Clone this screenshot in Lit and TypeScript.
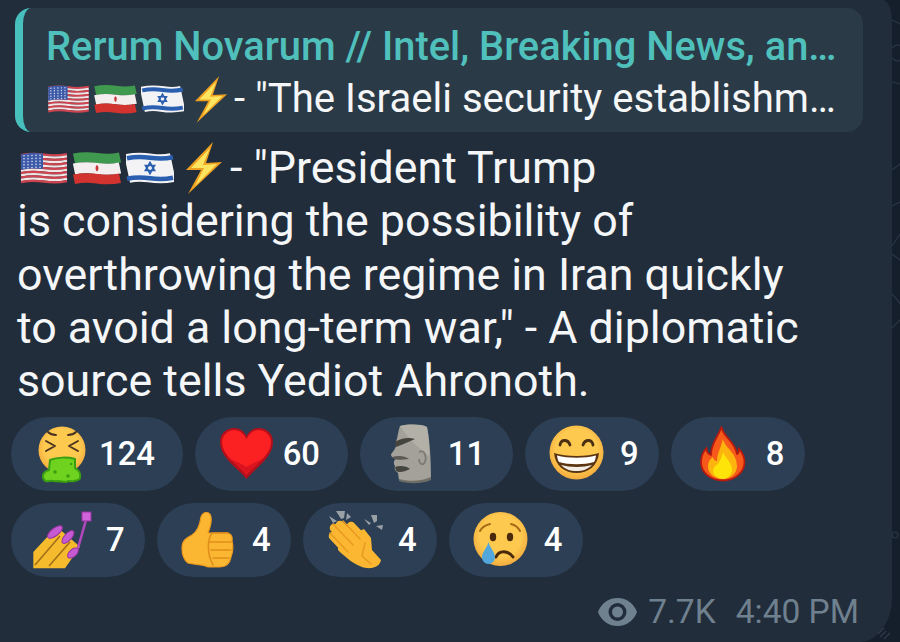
import { LitElement, html, css, svg } from 'lit';
import { customElement } from 'lit/decorators.js';

// wavy band across a flag, used for every stripe
const wave = (y: number) =>
  `M1 ${y + 0.5} C9 ${y - 1.2} 16 ${y - 1.2} 24 ${y} S39 ${y + 1.2} 47 ${y - 0.5}`;

const band = (y: number, h: number, color: string) =>
  svg`<path d=${wave(y + h / 2)} fill="none" stroke=${color} stroke-width=${h}></path>`;

const flagUs = () => html`<svg class="flag" viewBox="0 0 48 34">
  ${Array.from({ length: 13 }, (_, i) => band(2.5 + i * 2.25, 2.3, i % 2 ? '#f1e6e6' : '#d0434f'))}
  <path d="M1 3.5 C7 2 14 1.5 23 2.5 V18 C14 17 7 17.5 1 19Z" fill="#3d5aa8"></path>
  ${[5, 8, 11, 14, 17].map((y) =>
    [4, 8, 12, 16, 20].map(
      (x) => svg`<circle cx=${x} cy=${y - x * 0.04} r="0.8" fill="#d9e0f2"></circle>`,
    ),
  )}
</svg>`;

const flagIr = () => html`<svg class="flag" viewBox="0 0 48 34">
  ${band(2, 10, '#3f9a4f')}
  ${band(12, 11, '#f4efee')}
  ${band(23, 9.5, '#d3332f')}
  <path d="M24 14 C22.2 15 22 19 24 20.5 C26 19 25.8 15 24 14Z" fill="#c9363a"></path>
</svg>`;

const flagIl = () => html`<svg class="flag" viewBox="0 0 48 34">
  ${band(2.5, 29, '#f3f3f6')}
  ${band(4.5, 4.5, '#2a5fb0')}
  ${band(25, 4.5, '#2a5fb0')}
  <path d="M24 11.5 L28.5 19.5 H19.5Z M24 22.5 L19.5 14.5 H28.5Z" fill="none" stroke="#2a5fb0" stroke-width="1.7"></path>
</svg>`;

const bolt = () => html`<svg class="bolt" viewBox="0 0 38 52">
  <path d="M28 0 L1 28 L16 28 L3 52 L37 20 L21 21Z" fill="#eea021"></path>
  <path d="M25 6 L6 26 L19 26 L10 44 L32 22 L18 23Z" fill="#fde560"></path>
</svg>`;

const faceFill = svg`<defs><radialGradient id="face" cx="0.5" cy="0.45" r="0.55">
  <stop offset="0.7" stop-color="#fdc94f"></stop>
  <stop offset="1" stop-color="#f3ab3e"></stop>
</radialGradient></defs>`;

const vomit = () => html`<svg class="emoji" viewBox="0 0 56 56">
  ${faceFill}
  <circle cx="30" cy="24" r="23.5" fill="url(#face)"></circle>
  <path d="M14 15 L23 20 L14 25 M46 15 L37 20 L46 25 M16 6 C18 8 21 9 24 9 M44 6 C42 8 39 9 36 9" fill="none" stroke="#4a3320" stroke-width="1.9" stroke-linecap="round" stroke-linejoin="round"></path>
  <path d="M18 34 C25 31 36 31 43 33 L43 42 C47 44 49 48 48 52 C47 55 44 54 42 55 C39 56 37 54 34 56 C31 55 28 56 26 55 C23 56 20 54 17 55 C14 56 12 54 11 52 C10 48 13 45 17 44Z" fill="#6fd21f" stroke="#3a9e12" stroke-width="2"></path>
  <circle cx="23" cy="46" r="1.8" fill="#3a9e12"></circle>
  <circle cx="36" cy="50" r="1.8" fill="#3a9e12"></circle>
  <circle cx="39" cy="38" r="1.2" fill="#3a9e12"></circle>
</svg>`;

const heart = () => html`<svg class="emoji" viewBox="0 0 56 56">
  <path d="M30.5 53 C22 42 4 32 4 16 C4 7 11 2 18 2 C24 2 28 5 30.5 10 C33 5 37 2 43 2 C50 2 57 7 57 16 C57 32 39 42 30.5 53Z" fill="#b4101c"></path>
  <path d="M30.5 49 C23 39 6 30 6 16 C6 9 12 4 18 4 C24 4 28 8 30.5 13 C33 8 37 4 43 4 C49 4 55 9 55 16 C55 30 38 39 30.5 49Z" fill="#fb2022"></path>
  <path d="M30.5 49 C26 43 20 38 14 33 C21 36 26 38 30.5 41 C35 38 40 36 47 33 C41 38 35 43 30.5 49Z" fill="#d9141e"></path>
</svg>`;

const moai = () => html`<svg class="emoji" viewBox="0 0 56 56">
  <path d="M19 0 C28 -2 40 -2 46 1 C49 15 50 35 50 53 C42 57 26 57 18 54 L17 47 C14 45 13 43 14 40 C12 37 13 34 15 33 C10 31 9 29 11 27 C14 23 16 20 15 16 C17 10 17 5 19 0Z" fill="#a3a199"></path>
  <path d="M19 0 C28 -2 40 -2 46 1 C48 10 48 20 48 30 C40 24 30 16 19 0Z" fill="#b9b7ae" opacity="0.7"></path>
  <path d="M14 16 C20 12 28 11 34 13 C28 16 22 18 15 21Z" fill="#45453f"></path>
  <path d="M11 31 C18 29 24 30 28 33 C22 34 16 34 13 33Z" fill="#5a5a53"></path>
  <path d="M14 41 C19 39 26 40 29 43 C23 46 18 47 15 45Z" fill="#45453f"></path>
  <path d="M38 26 C43 23 46 30 44 36 C42 40 38 38 38 33" fill="none" stroke="#7d7c74" stroke-width="1.8"></path>
  <path d="M18 53 C28 56 42 55 50 51 V54 C42 58 26 58 18 55Z" fill="#6e6d66"></path>
</svg>`;

const grin = () => html`<svg class="emoji" viewBox="0 0 56 56">
  ${faceFill}
  <circle cx="30.5" cy="26.5" r="27" fill="url(#face)"></circle>
  <path d="M14 19 C15 13 22 13 24 19 M37 19 C39 13 46 13 47 19" fill="none" stroke="#4b2f12" stroke-width="2.8" stroke-linecap="round"></path>
  <path d="M8 27 C20 31 41 31 53 27 C52 40 42 47 30.5 47 C19 47 9 40 8 27Z" fill="#5b3512"></path>
  <path d="M11 29.5 C22 32.5 39 32.5 50 29.5 C49.5 33 49 35 48 36 C38 39 23 39 13 36 C12 34 11.5 33 11 29.5Z" fill="#fff"></path>
  <path d="M15 39 C24 41.5 37 41.5 46 39 C41 44 36 45 30.5 45 C25 45 20 44 15 39Z" fill="#f4efe6"></path>
</svg>`;

const fire = () => html`<svg class="emoji" viewBox="0 0 56 56">
  <path d="M29.5 1 C31 11 43 15 45 28 C47 27 47 24 46.5 22 C50 26 52.5 31 52.5 36 C52.5 47 42 54.5 31 54.5 C19 54.5 9 47 9 36 C9 31 11 26 14.5 22 C14.5 25 16 28 19 29 C18.5 18 26 11 29.5 1Z" fill="#f6591a" stroke="#b8190f" stroke-width="1.8" stroke-linejoin="round"></path>
  <path d="M31 13 C33 22 45 27 45 40 C45 48 38 53 31 53 C23 53 16 48 16 41 C16 36 18 33 21 31 C21 33 23 35 25 35 C25 28 29 21 31 13Z" fill="#fdb40f"></path>
  <path d="M31 26 C33 32 40 36 40 44 C40 49 35 53 31 53 C26 53 21 49 21 45 C21 42 24 39 26 38 C28 35 30 31 31 26Z" fill="#ffe40a"></path>
</svg>`;

const nails = () => html`<svg class="emoji" viewBox="0 0 56 56">
  <path d="M1.3 40 L24.7 14.7 L48 34.7 L33 56.3 H1.3Z" fill="#f5bb2c"></path>
  <path d="M3 53 L28 24 M17 54 L38 30" fill="none" stroke="#a3701a" stroke-width="1.6"></path>
  <g fill="#c65ad3" stroke="#97349f" stroke-width="1">
    <ellipse cx="23" cy="20" rx="9" ry="3.8" transform="rotate(-38 23 20)"></ellipse>
    <ellipse cx="36" cy="25" rx="8" ry="3.6" transform="rotate(-48 36 25)"></ellipse>
    <ellipse cx="41" cy="41" rx="6.5" ry="3.6" transform="rotate(-42 41 41)"></ellipse>
  </g>
  <path d="M54 8 L46 36" stroke="#b048bc" stroke-width="2.6" stroke-linecap="round"></path>
  <rect x="50" y="0" width="9" height="9" fill="#d063dc" stroke="#97349f"></rect>
</svg>`;

const thumb = () => html`<svg class="emoji" viewBox="0 0 56 56">
  <path d="M4 36 C4 29 8 26 14 23 C20 19 22 12 23 5 C25 -1 32 -1 33 5 C34 11 32 16 30 21 H46 C52 20 55 24 54 29 C55 33 55 40 53 45 C52 51 48 55 42 55 H30 C24 52 17 53 10 51 C6 48 4 43 4 36Z" fill="#fbb731" stroke="#ef9a1e" stroke-width="1.2"></path>
  <path d="M34 21 H50 M32 30 H53 M33 38 H53 M35 46 H51 M34 21 C29 28 29 42 35 53" fill="none" stroke="#e08f1c" stroke-width="1.6" stroke-linecap="round"></path>
</svg>`;

const clap = () => html`<svg class="emoji" viewBox="0 0 56 56">
  <path d="M14 28 L40 17 L47 26 L48 38 L57 48 C56 52 54 54 51 55 C46 57 41 56 38 55 C30 52 22 46 14 38Z" fill="#fbb731"></path>
  <path d="M9 24 L26 42 M10 16 L31 37 M16 13 L36 32 M27 14 L42 30" fill="none" stroke="#fbb731" stroke-width="8.5" stroke-linecap="round"></path>
  <path d="M6 21 L24 40 M9 12 L29 33 M19 9 L36 27 M41 31 L38 44 L47 52" fill="none" stroke="#e99a20" stroke-width="1.5" stroke-linecap="round" stroke-linejoin="round"></path>
  <path d="M5 4 L13 9 L9 11Z M12 -1 L17 7 L20 6 L21 -1Z M23 1 L22 8 L27 5Z M40 7 L47 11 L45 13Z M47 3 L50 11 L53 9 L53 3Z M52 14 L59 13 L58 18Z" fill="#9aa0a6"></path>
</svg>`;

const cry = () => html`<svg class="emoji" viewBox="0 0 56 56">
  ${faceFill}
  <circle cx="30.5" cy="27" r="27" fill="url(#face)"></circle>
  <ellipse cx="23" cy="25" rx="3.2" ry="4.2" fill="#4b2a0a"></ellipse>
  <ellipse cx="40" cy="25" rx="3.2" ry="4.2" fill="#4b2a0a"></ellipse>
  <path d="M10 19 C12 15 16 13 20 12 M41 12 C45 13 48 15 50 19" fill="none" stroke="#a86b18" stroke-width="2" stroke-linecap="round"></path>
  <path d="M26 45 C29 38 38 38 43 45" fill="none" stroke="#4b2a0a" stroke-width="3" stroke-linecap="round"></path>
  <path d="M18.5 30 C20 36 25 40 25 45 C25 49 22 52 18.5 52 C15 52 12 49 12 45 C12 40 17 36 18.5 30Z" fill="#52a8dc"></path>
</svg>`;

const REACTIONS: [() => unknown, number][] = [
  [vomit, 124],
  [heart, 60],
  [moai, 11],
  [grin, 9],
  [fire, 8],
  [nails, 7],
  [thumb, 4],
  [clap, 4],
  [cry, 4],
];

@customElement('app-root')
export class AppRoot extends LitElement {
  static styles = css`
    :host {
      display: flex;
      width: 900px;
      height: 642px;
      overflow: hidden;
      background: #151f2c;
      font-family: Roboto, 'Liberation Sans', sans-serif;
      color: #fff;
    }

    .bubble {
      width: 892px;
      height: 642px;
      box-sizing: border-box;
      flex: none;
      padding: 8px 29px 0 0;
      background: #212d3a;
      border-top-right-radius: 9px 22px;
      border-bottom-right-radius: 32px 44px;
    }

    .reply {
      display: flex;
      flex-direction: column;
      height: 124px;
      box-sizing: border-box;
      margin-left: 15px;
      padding: 16px 20px 0 24px;
      border-left: 8px solid #47bfbc;
      border-radius: 16px;
      background: #2b3a47;
    }

    .reply-title {
      margin-left: -1px;
      font-size: 39.85px;
      font-weight: 500;
      line-height: 46px;
      color: #4fc0bb;
      white-space: nowrap;
    }

    .reply-text {
      display: flex;
      align-items: center;
      margin-top: 5px;
      font-size: 40.1px;
      line-height: 48px;
      color: #f4f6f8;
      white-space: nowrap;
    }

    .reply-text .flag {
      width: 43px;
      height: 30px;
      margin-right: 4px;
    }

    .reply-text .bolt {
      width: 34px;
      height: 47px;
      margin: 0 6px 0 6px;
    }

    .message {
      margin: 9px 35px 0 17px;
      font-size: 44.75px;
      line-height: 53.3px;
      color: #f4f6f8;
    }

    .lead {
      display: flex;
      align-items: center;
    }

    .lead .flag {
      width: 48px;
      height: 34px;
      margin-right: 5px;
    }

    .lead .flag:first-child {
      margin-left: 3px;
    }

    .lead .bolt {
      width: 38px;
      height: 52px;
      margin: 0 7px 0 6px;
    }

    .reactions {
      display: flex;
      flex-wrap: wrap;
      gap: 12px;
      margin: 10px 0 0 11px;
    }

    .chip {
      display: flex;
      align-items: center;
      height: 74px;
      padding: 0 27.8px 0 21px;
      border-radius: 37px;
      background: #2c3f55;
      font-size: 32.8px;
      font-weight: 500;
    }

    .emoji {
      display: block;
      width: 56px;
      height: 56px;
      margin-right: 11px;
      overflow: visible;
    }

    /* single digit counts sit a little further from the emoji */
    .one {
      padding-left: 7px;
      margin-right: -7.5px;
    }

    .meta {
      display: flex;
      align-items: center;
      justify-content: flex-end;
      margin-top: 13px;
      padding-right: 4px;
      font-size: 33.5px;
      line-height: 44px;
      color: #6f808f;
    }

    .eye {
      width: 39px;
      height: 28px;
      margin-right: 11px;
    }

    .time {
      margin-left: 20px;
    }

    .rail {
      flex: 1;
    }

    .rail svg {
      display: block;
      width: 8px;
      height: 642px;
      overflow: visible;
    }
  `;

  render() {
    return html`
      <div class="bubble">
        <div class="reply">
          <div class="reply-title">Rerum Novarum // Intel, Breaking News, an…</div>
          <div class="reply-text">
            ${flagUs()}${flagIr()}${flagIl()}${bolt()}<span>- "The Israeli security establishm…</span>
          </div>
        </div>
        <div class="message">
          <div class="lead">
            ${flagUs()}${flagIr()}${flagIl()}${bolt()}<span>- "President Trump</span>
          </div>
          is considering the possibility of overthrowing the regime in Iran quickly to avoid a
          long-term war," - A diplomatic source tells Yediot Ahronoth.
        </div>
        <div class="reactions">
          ${REACTIONS.map(
            ([icon, count]) =>
              html`<div class="chip">
                ${icon()}<span class=${count < 10 ? 'one' : ''}>${count}</span>
              </div>`,
          )}
        </div>
        <div class="meta">
          <svg class="eye" viewBox="0 0 39 28">
            <path fill-rule="evenodd" d="M19.5 0 C29 0 36 6 39 14 C36 22 29 28 19.5 28 C10 28 3 22 0 14 C3 6 10 0 19.5 0Z M19.5 5 A9 9 0 1 0 19.5 23 A9 9 0 1 0 19.5 5Z" fill="#6f808f"></path>
            <circle cx="19.5" cy="14" r="5.5" fill="#6f808f"></circle>
          </svg>
          <span>7.7K</span>
          <span class="time">4:40 PM</span>
        </div>
      </div>
      <div class="rail">
        <svg viewBox="892 0 8 642">
          <path d="M892 20 L900 24 M892 48 C896 44 898 44 900 46 M892 58 C896 62 898 62 900 60 M892 82 L900 84 M892 170 L900 164 M892 206 L900 202 M892 246 L900 234 M892 254 L900 260 M892 294 C896 298 898 300 900 304 M892 328 L900 320" fill="none" stroke="#2a3646" stroke-width="1.2"></path>
          <circle cx="895" cy="535" r="3" fill="none" stroke="#2a3646" stroke-width="1.2"></circle>
          <path d="M880 637 L886 631 M884 639 L890 633 M878 634 L884 628" fill="none" stroke="#2f3b4b" stroke-width="1.2"></path>
        </svg>
      </div>
    `;
  }
}
